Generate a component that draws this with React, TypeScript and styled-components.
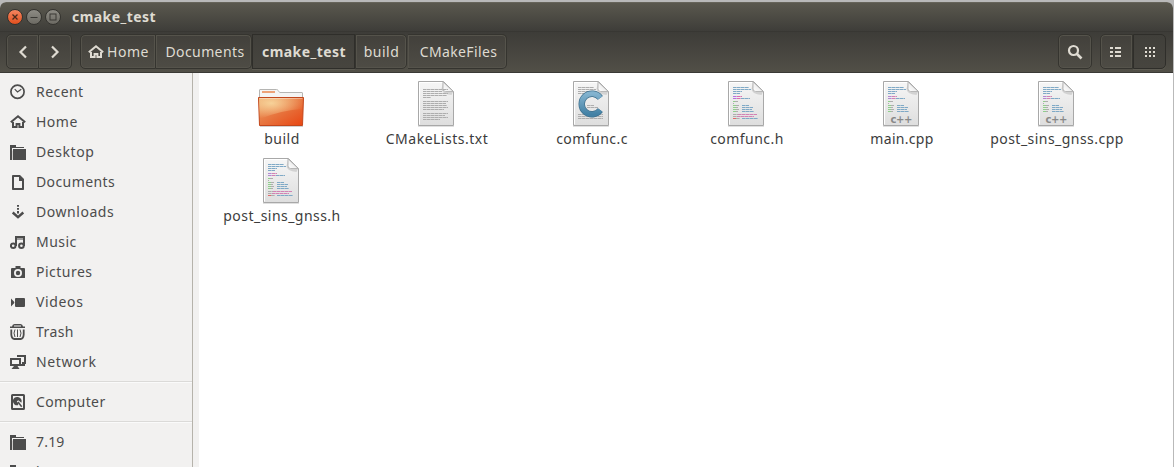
import React from "react";
import styled, { createGlobalStyle, css } from "styled-components";

const GlobalStyle = createGlobalStyle`
  * { box-sizing: border-box; }
  body {
    margin: 0;
    background: #fff;
    font-family: "Noto Sans", "Open Sans", sans-serif;
    font-size: 14px;
    overflow: hidden;
  }
`;

const Desktop = styled.div`
  width: 1174px;
  height: 467px;
  padding: 2px 1px 0 0;
  background: #b9b9b9;
  overflow: hidden;
`;

const Window = styled.div`
  height: 465px;
  display: flex;
  flex-direction: column;
  border-radius: 6px 6px 0 0;
  background: #fff;
  overflow: hidden;
`;

const TitleBar = styled.header`
  flex: none;
  height: 29px;
  display: flex;
  align-items: center;
  gap: 3px;
  padding: 0 0 1px 6.5px;
  border-top: 1px solid #66645a;
  background: linear-gradient(#5a584e, #3e3d39);
`;

const WindowButton = styled.span<{ $close?: boolean }>`
  width: 16px;
  height: 16px;
  border-radius: 50%;
  border: 1px solid #34332f;
  background: ${(p) =>
    p.$close
      ? "linear-gradient(#f58560, #e2501e)"
      : "linear-gradient(#8d8b84, #6c6a63)"};
  svg { display: block; }
`;

const Title = styled.h1`
  margin: 1px 0 0 8.5px;
  font-size: 14px;
  line-height: 20px;
  letter-spacing: 0.43px;
  color: #dfdbd2;
`;

const Toolbar = styled.nav`
  flex: none;
  height: 42px;
  display: flex;
  align-items: flex-start;
  padding: 2px 7px 0 6px;
  border-top: 1px solid #383733;
  border-bottom: 1px solid #3a3935;
  background: linear-gradient(#3d3c38, #514f47);
`;

const Group = styled.div<{ $ml?: string }>`
  display: flex;
  margin-left: ${(p) => p.$ml ?? "0"};
`;

const BarButton = styled.button<{
  $w: number;
  $first?: boolean;
  $last?: boolean;
  $active?: boolean;
  $gap?: boolean;
  $indent?: number;
}>`
  width: ${(p) => p.$w}px;
  height: 35px;
  margin: 0 ${(p) => (p.$gap ? 1 : 0)}px 0 0;
  padding: 0 0 0 ${(p) => p.$indent ?? 0}px;
  display: flex;
  align-items: center;
  justify-content: center;
  gap: 3px;
  font: inherit;
  color: #dfdbd2;
  border: 1px solid #35342f;
  border-left-width: ${(p) => (p.$first || p.$gap || p.$active ? 1 : 0)}px;
  border-radius: ${(p) =>
    `${p.$first ? 5 : 0}px ${p.$last ? 5 : 0}px ${p.$last ? 5 : 0}px ${p.$first ? 5 : 0}px`};
  background: linear-gradient(#42403b, #4e4c45);
  box-shadow: inset 0 0 0 1px #55534b;
  ${(p) =>
    p.$active &&
    css`
      background: linear-gradient(#403f3a, #47453f);
      border-color: #2f2e2a;
      box-shadow: 0 1px 0 #5d5b52;
    `}
`;

const Label = styled.span<{ $ls: number; $bold?: boolean }>`
  line-height: 20px;
  white-space: nowrap;
  letter-spacing: ${(p) => p.$ls}px;
  font-weight: ${(p) => (p.$bold ? 700 : 400)};
`;

const Body = styled.div`
  flex: 1;
  min-height: 0;
  display: flex;
`;

const Sidebar = styled.aside`
  flex: none;
  width: 193px;
  padding-top: 4px;
  background: #f2f1f0;
  border-right: 1px solid #b6b3ab;
  overflow: hidden;
`;

const Gutter = styled.div`
  flex: none;
  width: 6px;
  background: #f2f1f0;
`;

const Place = styled.div`
  height: 30px;
  display: flex;
  align-items: center;
  gap: 10px;
  padding-left: 10px;
  color: #4c4c4c;
  svg { flex: none; }
`;

const Divider = styled.div`
  height: 2px;
  margin: 4px 0;
  border-top: 1px solid #dbdad8;
  background: #fafafa;
`;

const Files = styled.main`
  flex: 1;
  display: grid;
  grid-template-columns: repeat(6, 155px);
  grid-auto-rows: 77px;
  padding: 6px 0 0 4.5px;
  color: #3c3c3c;
`;

const File = styled.figure`
  margin: 0;
  display: flex;
  flex-direction: column;
  align-items: center;
  svg { display: block; }
`;

const FileName = styled.figcaption<{ $ls: number }>`
  margin-top: 2px;
  padding-left: 2px;
  line-height: 20px;
  letter-spacing: ${(p) => p.$ls}px;
`;

const Sym = ({ children }: { children: React.ReactNode }) => (
  <svg width="16" height="16" viewBox="0 0 16 16" fill="currentColor">{children}</svg>
);

const HomeIcon = () => (
  <Sym>
    <path d="M0.8 8.2 8 2.2l7.2 6" fill="none" stroke="currentColor" strokeWidth="2" />
    <path d="M3 8v5h3.6v-3h2.8v3H13V8" fill="none" stroke="currentColor" strokeWidth="2" />
  </Sym>
);
const FolderIcon = () => (
  <Sym>
    <path d="M0 1h6v2h8v1H2v12H0z" />
    <path d="M3 5h13v11H2V6.500h1z" />
    <path d="M2.500 16V5.500" stroke="#f2f1f0" strokeWidth="0.8" />
  </Sym>
);
const icons: Record<string, React.ReactNode> = {
  recent: (
    <Sym>
      <circle cx="7.500" cy="7.700" r="6.600" fill="none" stroke="currentColor" strokeWidth="1.700" />
      <path d="M4.700 5.200 7.500 8l3.800-2.800" fill="none" stroke="currentColor" strokeWidth="1.200" />
    </Sym>
  ),
  home: <HomeIcon />,
  folder: <FolderIcon />,
  document: <Sym><path fillRule="evenodd" d="M3 1h7l4 4v10.200q0 .8-.8.8H2.800q-.8 0-.8-.8V1.800Q2 1 3 1zM4 3v11h8V7H9V3z" /></Sym>,
  download: (
    <Sym>
      <path d="M7 1h2v1.800H7zM7 4h2v1.800H7zM7 7h2v2.500H7z" />
      <path d="M2.700 8.500 8 13.200l5.300-4.700" fill="none" stroke="currentColor" strokeWidth="2.400" />
    </Sym>
  ),
  music: (
    <Sym>
      <g fill="none" stroke="currentColor" strokeWidth="2">
        <circle cx="3.200" cy="11.800" r="2.300" /><circle cx="11.400" cy="11.800" r="2.300" />
        <path d="M6 12V3h8v9" /><path d="M6 5h8" strokeWidth="1.200" />
      </g>
    </Sym>
  ),
  camera: (
    <Sym>
      <path fillRule="evenodd" d="M5.500 2h5v2H14q1 0 1 1v8.500q0 .5-.5.5h-13q-.5 0-.5-.5V5q0-1 1-1h3.500zM8 5a4 4 0 1 0 0 8 4 4 0 0 0 0-8z" />
      <circle cx="8" cy="9" r="2.200" />
    </Sym>
  ),
  video: <Sym><path d="M1 4.500 4.300 8v1L1 12.500zM6 4h8q1 0 1 1v7q0 1-1 1H6q-1 0-1-1V5q0-1 1-1z" /></Sym>,
  trash: (
    <Sym>
      <path d="M0 2.500h2Q2.300 0 4.500 0h6Q12.700 0 13 2.500h2V4H0z" />
      <path d="M4 2h7" stroke="#f2f1f0" />
      <g fill="none" stroke="currentColor">
        <path d="M1.300 5.500v5.200q.4 4.300 3 4.300h6.400q2.600 0 3-4.300V5.500" strokeWidth="1.800" />
        <path d="M5 5.500q-2 3.500 0 7.500M7.500 5.500V13M10 5.500q2 3.500 0 7.500" strokeWidth="1" />
      </g>
    </Sym>
  ),
  network: (
    <Sym>
      <path d="M7 2h8v7h-3" fill="none" stroke="currentColor" strokeWidth="2" />
      <path d="M11 10h4v2h-4z" />
      <path d="M1 5h9v6H1z" fill="#f2f1f0" stroke="currentColor" strokeWidth="2" />
      <path d="M4 12h3.500l2 3h-8z" />
    </Sym>
  ),
  computer: (
    <Sym>
      <rect x="2" y="1" width="12" height="14" rx="0.500" fill="none" stroke="currentColor" strokeWidth="2" />
      <path d="M8 3a4.200 4.200 0 1 0 0 8.200l.4-1.700-1.600-2 1.400-1.300 3.200 2.500A4.200 4.200 0 0 0 8 3z" />
      <path d="m8 8 3.700 4.700" stroke="currentColor" strokeWidth="1.500" />
    </Sym>
  ),
};

type Bar = [number, number, number, string];
const BLUE = "#7fa9c6";
const GREY = "#adadad";
const GREEN = "#8fcf8c";
const PURPLE = "#b287d2";
const PINK = "#d382b4";
const codeTop: Bar[] = [
  [11, 8, 16, BLUE], [11, 10, 18, BLUE], [11, 12, 9, BLUE], [11, 14, 7, BLUE],
  [11, 17, 4, PURPLE], [15, 17, 5, PINK],
  [11, 19, 4, PURPLE], [15, 19, 4, PINK], [19, 19, 9, BLUE],
  [11, 22, 2, GREEN], [13, 22, 3, GREY], [11, 24, 1, GREY],
  [11, 26, 3, GREEN], [14, 26, 3, GREY], [20, 26, 7, BLUE],
  [11, 28, 3, GREEN], [14, 28, 2, GREY], [20, 28, 11, BLUE],
  [11, 30, 3, GREEN], [14, 30, 3, GREY], [20, 30, 10, BLUE],
  [11, 32, 3, GREEN], [14, 32, 2, GREY], [20, 32, 12, BLUE],
];
const codeBottom: Bar[] = [
  [11, 35, 5, GREY], [16, 35, 19, PINK],
  [11, 37, 4, GREY], [15, 37, 17, PINK],
  [11, 39, 3, "#e26a6a"], [14, 39, 4, GREY], [20, 39, 16, BLUE],
];
const headerCode: Bar[] = codeTop.map(([x, y, w, c]) =>
  y === 17 || (y === 19 && x < 19) ? [x, y, w, x === 11 ? "#b76fe0" : "#dc6cb0"] : [x, y, w, c]
);
const prose: Bar[] = [
  [11, 10, 25, GREY], [11, 12, 19, GREY], [11, 14, 25, GREY], [11, 16, 24, GREY], [11, 18, 8, GREY],
  [11, 22, 25, GREY], [11, 24, 23, GREY], [11, 26, 24, GREY], [11, 28, 25, GREY], [11, 30, 21, GREY],
  [11, 34, 25, GREY], [11, 36, 22, GREY], [11, 38, 25, GREY], [11, 40, 17, GREY],
];
const cProse: Bar[] = [
  [11, 8, 16, GREY], [11, 10, 18, GREY], [11, 12, 18, GREY], [11, 14, 22, GREY], [20, 26, 7, GREY],
  [20, 28, 11, GREY], [11, 35, 25, GREY], [11, 37, 25, GREY], [11, 39, 25, GREY],
];

const Page = ({ bars, children }: { bars: Bar[]; children?: React.ReactNode }) => (
  <svg width="48" height="48" viewBox="0 0 48 48">
    <defs>
      <linearGradient id="paper" x1="0" y1="0" x2="0" y2="1">
        <stop offset="0" stopColor="#f6f6f6" /><stop offset="1" stopColor="#dedede" />
      </linearGradient>
      <linearGradient id="fold" x1="0" y1="1" x2="1" y2="0">
        <stop offset="0" stopColor="#fff" /><stop offset="0.500" stopColor="#eee" /><stop offset="1" stopColor="#bbb" />
      </linearGradient>
      <linearGradient id="ring" x1="0" y1="0" x2="0" y2="1">
        <stop offset="0" stopColor="#83b3cf" /><stop offset="1" stopColor="#4381a5" />
      </linearGradient>
    </defs>
    <path d="M6 47.500h36" stroke="#000" strokeOpacity="0.120" />
    <path d="M6.500 2.500h25l10 10v34h-35z" fill="url(#paper)" stroke="#a8a8a8" />
    <path d="M7.500 45.500v-42h23" fill="none" stroke="#fff" />
    <path d="M31 3v6.500q0 3.500 3.500 3.500H41l-1.500 3q-10-1-10-6z" fill="#000" opacity="0.120" />
    <path d="M31 2.800v7q0 2.700 2.700 2.700h7.500z" fill="url(#fold)" stroke="#a8a8a8" strokeWidth="0.800" />
    {bars.map(([x, y, w, c], i) => (
      <path key={i} d={`M${x} ${y + 0.5}h${w}`} stroke={c} strokeWidth="1.100" strokeDasharray="3.600 0.400" />
    ))}
    {children}
  </svg>
);

const CLetter = () => (
  <>
    <path d="M33.800 31.600A10.300 10.300 0 1 1 33.800 19.400" transform="translate(-.5 -.5)" fill="none" stroke="#3f6f8c" strokeWidth="6.400" />
    <path d="M33.800 31.600A10.300 10.300 0 1 1 33.800 19.400" transform="translate(-.5 -.5)" fill="none" stroke="url(#ring)" strokeWidth="5" />
  </>
);

const CppText = styled.text`
  font: 700 10px "DejaVu Sans", sans-serif;
  fill: #888;
`;
const Cpp = () => <CppText x="13.500" y="43.500" textLength="22">c++</CppText>;

const BigFolder = () => (
  <svg width="48" height="48" viewBox="0 0 48 48">
    <defs>
      <linearGradient id="front" x1="0" y1="0" x2="1" y2="1">
        <stop offset="0" stopColor="#eda468" /><stop offset="0.550" stopColor="#e7703a" /><stop offset="1" stopColor="#e84512" />
      </linearGradient>
      <radialGradient id="glow" cx="0.280" cy="0.250" r="0.750">
        <stop offset="0" stopColor="#f8d9a0" stopOpacity="0.900" /><stop offset="1" stopColor="#f8d9a0" stopOpacity="0" />
      </radialGradient>
    </defs>
    <path d="M3 47.500h43" stroke="#000" strokeOpacity="0.180" />
    <path d="M2.500 20V11q0-.5.500-.5h16.500q1 0 1.500.8l1.700 2.200h22.300q.5 0 .5.500v6z" fill="#f4f4f3" stroke="#b5b5b3" />
    <path d="M5 12h13v2H5z" fill="#eda277" />
    <path d="M1.500 18.500h45l-1 28h-43z" fill="url(#front)" stroke="#c2471c" />
    <path d="M2 19h44l-.5 11Q25 31 2.600 40z" fill="url(#glow)" />
    <path d="M2.500 19.500h43" stroke="#fff" strokeOpacity="0.350" />
  </svg>
);

const places: [string, string, number][] = [
  ["Recent", "recent", 0.45], ["Home", "home", 0.5], ["Desktop", "folder", 0.58],
  ["Documents", "document", 0.4], ["Downloads", "download", 0.55], ["Music", "music", 0.45],
  ["Pictures", "camera", 0.48], ["Videos", "video", 0.65], ["Trash", "trash", 0.4],
  ["Network", "network", 0.6],
];

const files: [string, number, React.ReactNode][] = [
  ["build", 0.5, <BigFolder />],
  ["CMakeLists.txt", 0.5, <Page bars={prose} />],
  ["comfunc.c", 0.45, <Page bars={cProse}><CLetter /></Page>],
  ["comfunc.h", 0.45, <Page bars={[...headerCode, ...codeBottom]} />],
  ["main.cpp", 0.3, <Page bars={codeTop}><Cpp /></Page>],
  ["post_sins_gnss.cpp", 0.46, <Page bars={codeTop}><Cpp /></Page>],
  ["post_sins_gnss.h", 0.46, <Page bars={[...codeTop, ...codeBottom]} />],
];

const PlaceRow = ({ name, icon, ls }: { name: string; icon: string; ls: number }) => (
  <Place>{icons[icon]}<Label $ls={ls}>{name}</Label></Place>
);

export default function App() {
  return (
    <>
      <GlobalStyle />
      <Desktop>
        <Window>
          <TitleBar>
            <WindowButton $close>
              <svg width="14" height="14"><path d="m4.500 4.500 5 5m0-5-5 5" stroke="#4a2a1c" strokeWidth="1.300" /></svg>
            </WindowButton>
            <WindowButton>
              <svg width="14" height="14"><path d="M3.500 7.500h7" stroke="#3a3935" strokeWidth="1.200" /></svg>
            </WindowButton>
            <WindowButton>
              <svg width="14" height="14"><rect x="4" y="4" width="6" height="6" fill="none" stroke="#3a3935" /></svg>
            </WindowButton>
            <Title>cmake_test</Title>
          </TitleBar>
          <Toolbar>
            <Group>
              <BarButton $w={33} $first aria-label="Back">
                <svg width="10" height="14"><path d="M8 1.500 2.500 7 8 12.500" fill="none" stroke="currentColor" strokeWidth="2.200" /></svg>
              </BarButton>
              <BarButton $w={33} $last aria-label="Forward">
                <svg width="10" height="14"><path d="M2 1.500 7.500 7 2 12.500" fill="none" stroke="currentColor" strokeWidth="2.200" /></svg>
              </BarButton>
            </Group>
            <Group $ml="8px">
              <BarButton $w={76} $first $indent={1}><HomeIcon /><Label $ls={0.5}>Home</Label></BarButton>
              <BarButton $w={96} $last $indent={3}><Label $ls={0.4}>Documents</Label></BarButton>
              <BarButton $w={103} $active $indent={1}><Label $ls={0.43} $bold>cmake_test</Label></BarButton>
              <BarButton $w={52} $last $gap $indent={1}><Label $ls={0.5}>build</Label></BarButton>
              <BarButton $w={99} $last $indent={3}><Label $ls={0.38}>CMakeFiles</Label></BarButton>
            </Group>
            <Group $ml="auto">
              <BarButton $w={34} $first $last aria-label="Search">
                <svg width="16" height="16"><circle cx="6.500" cy="6.500" r="4.500" fill="none" stroke="currentColor" strokeWidth="2.200" /><path d="m10 10 4.500 4.500" stroke="currentColor" strokeWidth="2.600" /></svg>
              </BarButton>
            </Group>
            <Group $ml="8px">
              <BarButton $w={33} $first aria-label="List view">
                <svg width="13" height="10" fill="currentColor"><path d="M0 0h3v2H0zM5 0h6v2H5zM0 4h3v2H0zM5 4h6v2H5zM0 8h3v2H0zM5 8h6v2H5z" /></svg>
              </BarButton>
              <BarButton $w={33} $last $active aria-label="Icon view">
                <svg width="10" height="10" fill="currentColor"><path d="M0 0h2v2H0zM4 0h2v2H4zM8 0h2v2H8zM0 4h2v2H0zM4 4h2v2H4zM8 4h2v2H8zM0 8h2v2H0zM4 8h2v2H4zM8 8h2v2H8z" /></svg>
              </BarButton>
            </Group>
          </Toolbar>
          <Body>
            <Sidebar>
              {places.map(([n, i, ls]) => <PlaceRow key={n} name={n} icon={i} ls={ls} />)}
              <Divider />
              <PlaceRow name="Computer" icon="computer" ls={0.4} />
              <Divider />
              <PlaceRow name="7.19" icon="folder" ls={0.2} />
              <PlaceRow name="b" icon="folder" ls={0.5} />
            </Sidebar>
            <Gutter />
            <Files>
              {files.map(([n, ls, art]) => (
                <File key={n}>{art}<FileName $ls={ls}>{n}</FileName></File>
              ))}
            </Files>
          </Body>
        </Window>
      </Desktop>
    </>
  );
}
